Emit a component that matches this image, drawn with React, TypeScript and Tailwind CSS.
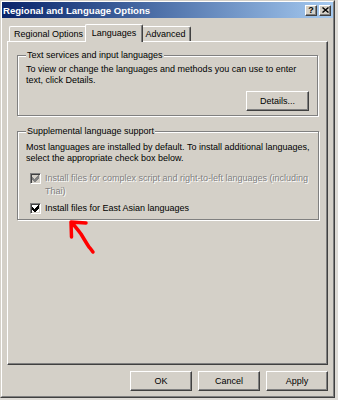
import clsx from 'clsx';

const raised =
  'border border-t-white border-l-white border-r-[#404040] border-b-[#404040] shadow-[inset_-1px_-1px_0_#808080] bg-[#d4d0c8]';

function CheckBox({ disabled }: { disabled?: boolean }) {
  return (
    <span
      className={clsx(
        'mt-[1px] flex h-[11px] w-[11px] shrink-0 items-center justify-center border border-t-[#808080] border-l-[#808080] border-r-white border-b-white shadow-[inset_1px_1px_0_#404040,inset_-1px_-1px_0_#d4d0c8]',
        disabled ? 'bg-[#d4d0c8]' : 'bg-white'
      )}
    >
      <svg width="7" height="7" viewBox="0 0 7 7" shapeRendering="crispEdges">
        <polygon points="0,2 2,4 6,0 7,0 7,3 3,7 2,7 0,5" fill={disabled ? '#808080' : '#000'} />
      </svg>
    </span>
  );
}

function Button({ label, className }: { label: string; className?: string }) {
  return (
    <button
      type="button"
      className={clsx('flex h-[20px] w-[62px] items-center justify-center text-[9px]', raised, className)}
    >
      {label}
    </button>
  );
}

function GroupBox({ title, children, className }: { title: string; children: React.ReactNode; className?: string }) {
  return (
    <fieldset
      className={clsx(
        'border border-[#808080] px-[8px] shadow-[inset_1px_1px_0_#fff,1px_1px_0_#fff]',
        className
      )}
    >
      <legend className="bg-[#d4d0c8] px-[1px] leading-[11px]">{title}</legend>
      {children}
    </fieldset>
  );
}

export default function App() {
  return (
    <div className="relative h-[400px] w-[338px] bg-[#dedbd6] font-['Liberation_Sans',Arial,sans-serif] text-[9px] leading-[11px] text-black">
      <div className="h-[398px] w-[335px] border border-t-[#d4d0c8] border-l-[#d4d0c8] border-r-[#404040] border-b-[#404040] bg-[#d4d0c8]">
        <div className="flex h-full flex-col border border-t-white border-l-white border-r-[#808080] border-b-[#808080]">
          {/* title bar */}
          <div className="flex h-[16px] items-center bg-gradient-to-r from-[#0a246a] to-[#a6caf0] pl-[1px] pr-[2px]">
            <span className="flex-1 text-[9.6px] font-bold text-white">Regional and Language Options</span>
            <span className={clsx('flex h-[11px] w-[12px] items-center justify-center text-[9px] font-bold leading-none', raised)}>
              ?
            </span>
            <span className={clsx('ml-[2px] flex h-[11px] w-[12px] items-center justify-center', raised)}>
              <svg width="7" height="6" viewBox="0 0 7 6">
                <path d="M0.5 0.5l6 5M6.5 0.5l-6 5" stroke="#000" strokeWidth="1.4" />
              </svg>
            </span>
          </div>

          <div className="flex flex-1 flex-col px-[5px] pt-[6px]">
            {/* tabs */}
            <div className="flex h-[17px] items-end pl-[2px]">
              <div className="flex h-[15px] w-[78px] items-center justify-center rounded-tl-[2px] border-t border-l border-t-white border-l-white">
                Regional Options
              </div>
              <div className="relative z-10 -mx-[2px] -mb-px flex h-[18px] w-[58px] items-start justify-center rounded-t-[2px] border-t border-l border-r border-t-white border-l-white border-r-[#404040] bg-[#d4d0c8] pt-[3px] shadow-[inset_-1px_0_0_#808080]">
                Languages
              </div>
              <div className="flex h-[15px] w-[50px] items-center justify-center rounded-tr-[2px] border-t border-r border-t-white border-r-[#404040] shadow-[inset_-1px_0_0_#808080]">
                Advanced
              </div>
            </div>

            {/* tab panel */}
            <div className="flex h-[324px] flex-col border border-t-white border-l-white border-r-[#404040] border-b-[#404040] px-[9px] pt-[8px] shadow-[inset_-1px_-1px_0_#808080]">
              <GroupBox title="Text services and input languages" className="pb-[4px]">
                <p className="whitespace-nowrap pt-[3px]">
                  To view or change the languages and methods you can use to enter
                  <br />
                  text, click Details.
                </p>
                <div className="mt-[5px] flex justify-end">
                  <Button label="Details..." className="w-[63px]" />
                </div>
              </GroupBox>

              <GroupBox title="Supplemental language support" className="mt-[10px] pb-[4px]">
                <p className="whitespace-nowrap pt-[5px]">
                  Most languages are installed by default. To install additional languages,
                  <br />
                  select the appropriate check box below.
                </p>
                <div className="mt-[8px] ml-[4px] flex items-start gap-[4px]">
                  <CheckBox disabled />
                  <span className="whitespace-nowrap leading-[13px] text-[#808080] [text-shadow:1px_1px_0_#fff]">
                    Install files for complex script and right-to-left languages (including
                    <br />
                    Thai)
                  </span>
                </div>
                <div className="mt-[4px] ml-[4px] flex items-start gap-[4px]">
                  <CheckBox />
                  <span className="leading-[13px]">Install files for East Asian languages</span>
                </div>
              </GroupBox>
            </div>

            {/* dialog buttons */}
            <div className="mt-[6px] flex justify-end gap-[6px]">
              <Button label="OK" />
              <Button label="Cancel" />
              <Button label="Apply" />
            </div>
          </div>
        </div>
      </div>

      {/* red annotation arrow */}
      <svg className="absolute left-[60px] top-[215px]" width="45" height="45" viewBox="0 0 45 45">
        <path
          d="M26 8L11 7L11.5 22M11 7C15 11 18 15 21 19C24 24 27 29 29 32C31 34 32 36 33 37"
          fill="none"
          stroke="#f00"
          strokeWidth="3.5"
          strokeLinecap="round"
          strokeLinejoin="round"
        />
      </svg>
    </div>
  );
}
